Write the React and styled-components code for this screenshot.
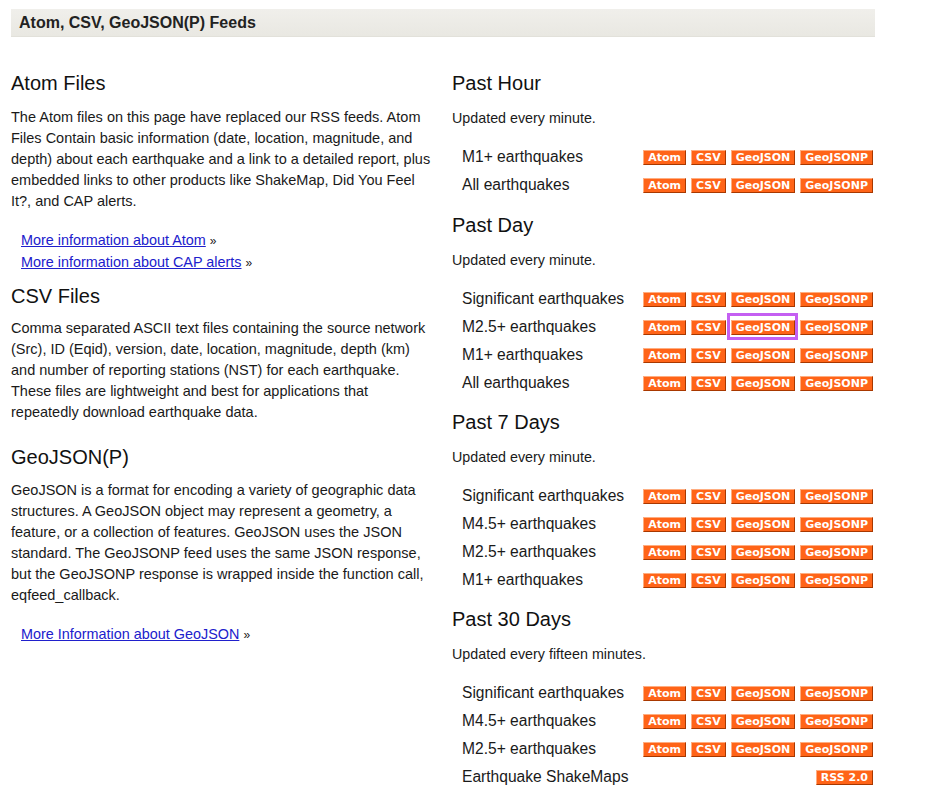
import React from 'react';
import styled, { createGlobalStyle } from 'styled-components';

const GlobalStyle = createGlobalStyle`
  body {
    margin: 0;
    background: #fff;
    font-family: "Liberation Sans", Arial, Helvetica, sans-serif;
    color: #1a1a1a;
  }
`

const Page = styled.div`
  width: 864px;
  padding: 9px 0 0 11px;
`

const TitleBar = styled.div`
  height: 28px;
  box-sizing: border-box;
  padding: 0 8px;
  display: flex;
  align-items: center;
  background: linear-gradient(#f0efeb, #e9e8e2);
  border-bottom: 1px solid #e2e1da;
  font-size: 16px;
  font-weight: bold;
  color: #222;
`

const Columns = styled.div`
  display: flex;
  justify-content: space-between;
  margin-top: 34px;
`

const Column = styled.div`
  width: ${p => p.$width}px;
`

const Heading = styled.h2`
  margin: 0;
  font-size: 20px;
  font-weight: normal;
  line-height: 24px;
  color: #111;
`

const Section = styled.div`
  margin-bottom: ${p => p.$after || 0}px;
`

const Para = styled.p`
  margin: ${p => p.$top || 12}px 0 0;
  font-size: 14.5px;
  line-height: 21px;
  color: #1a1a1a;
`

const LinkList = styled.ul`
  margin: 18px 0 0;
  padding: 0 0 0 10px;
  list-style: none;
  font-size: 14.4px;
  line-height: 21px;
`

const MoreLink = styled.a`
  color: #2020cc;
  text-decoration: underline;
  cursor: pointer;
`

const Raquo = styled.span`
  margin-left: 4px;
  font-size: 12px;
`

const Updated = styled.p`
  margin: 13px 0 0;
  font-size: 14.3px;
  line-height: 20px;
`

const FeedList = styled.div`
  margin-top: 15px;
`

const FeedRow = styled.div`
  height: 28px;
  display: flex;
  align-items: center;
  justify-content: space-between;
  padding: 0 2px 0 10px;
`

const FeedLabel = styled.span`
  font-size: 15.6px;
`

const Buttons = styled.div`
  display: flex;
  gap: 5px;
`

const FeedButton = styled.a`
  position: relative;
  display: inline-block;
  height: 15px;
  box-sizing: border-box;
  padding: 0 4px;
  background: #ff6418;
  border: 1px solid;
  border-color: #ffad80 #a83800 #a83800 #ffad80;
  color: #fff;
  font-family: "DejaVu Sans", Verdana, sans-serif;
  font-weight: bold;
  font-size: 11px;
  line-height: 13px;
  text-decoration: none;
  cursor: pointer;
`

const Highlight = styled.span`
  position: absolute;
  top: -8px;
  bottom: -6px;
  left: -5px;
  right: -4px;
  border: 3px solid #c45ff2;
  pointer-events: none;
`

const hour = ['M1+ earthquakes', 'All earthquakes'];
const day = ['Significant earthquakes', 'M2.5+ earthquakes', 'M1+ earthquakes', 'All earthquakes'];
const week = ['Significant earthquakes', 'M4.5+ earthquakes', 'M2.5+ earthquakes', 'M1+ earthquakes'];
const month = ['Significant earthquakes', 'M4.5+ earthquakes', 'M2.5+ earthquakes'];

const Feed = ({ label, highlight }) => (
  <FeedRow>
    <FeedLabel>{label}</FeedLabel>
    <Buttons>
      <FeedButton>Atom</FeedButton>
      <FeedButton>CSV</FeedButton>
      <FeedButton>GeoJSON{highlight && <Highlight />}</FeedButton>
      <FeedButton>GeoJSONP</FeedButton>
    </Buttons>
  </FeedRow>
)

const FeedSection = ({ title, note, rows, highlightRow, after, children }) => (
  <Section $after={after}>
    <Heading>{title}</Heading>
    <Updated>{note}</Updated>
    <FeedList>
      {rows.map((r, i) => <Feed key={i} label={r} highlight={i === highlightRow} />)}
      {children}
    </FeedList>
  </Section>
)

const App = () => {
  return (
    <Page>
      <GlobalStyle />
      <TitleBar>Atom, CSV, GeoJSON(P) Feeds</TitleBar>
      <Columns>
        <Column $width={421}>
          <Section $after={10}>
            <Heading>Atom Files</Heading>
            <Para>
              The Atom files on this page have replaced our RSS feeds. Atom Files Contain basic
              information (date, location, magnitude, and depth) about each earthquake and a link
              to a detailed report, plus embedded links to other products like ShakeMap, Did You
              Feel It?, and CAP alerts.
            </Para>
            <LinkList>
              <li><MoreLink>More information about Atom</MoreLink><Raquo>»</Raquo></li>
              <li><MoreLink>More information about CAP alerts</MoreLink><Raquo>»</Raquo></li>
            </LinkList>
          </Section>
          <Section $after={22}>
            <Heading>CSV Files</Heading>
            <Para $top={10}>
              Comma separated ASCII text files containing the source network (Src), ID (Eqid),
              version, date, location, magnitude, depth (km) and number of reporting stations
              (NST) for each earthquake. These files are lightweight and best for applications
              that repeatedly download earthquake data.
            </Para>
          </Section>
          <Section>
            <Heading>GeoJSON(P)</Heading>
            <Para $top={11}>
              GeoJSON is a format for encoding a variety of geographic data structures. A GeoJSON
              object may represent a geometry, a feature, or a collection of features. GeoJSON
              uses the JSON standard. The GeoJSONP feed uses the same JSON response, but the
              GeoJSONP response is wrapped inside the function call, eqfeed_callback.
            </Para>
            <LinkList>
              <li><MoreLink>More Information about GeoJSON</MoreLink><Raquo>»</Raquo></li>
            </LinkList>
          </Section>
        </Column>
        <Column $width={423}>
          <FeedSection title="Past Hour" note="Updated every minute." rows={hour} after={14} />
          <FeedSection title="Past Day" note="Updated every minute." rows={day} highlightRow={1} after={13} />
          <FeedSection title="Past 7 Days" note="Updated every minute." rows={week} after={13} />
          <FeedSection title="Past 30 Days" note="Updated every fifteen minutes." rows={month}>
            <FeedRow>
              <FeedLabel>Earthquake ShakeMaps</FeedLabel>
              <FeedButton>RSS 2.0</FeedButton>
            </FeedRow>
          </FeedSection>
        </Column>
      </Columns>
    </Page>
  );
}

export default App;
